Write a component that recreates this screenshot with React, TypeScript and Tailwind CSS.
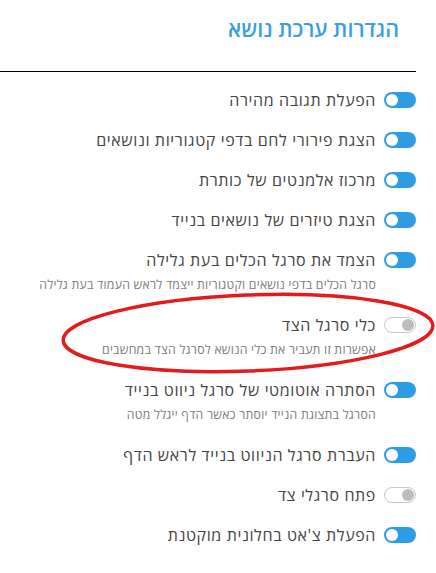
import { useState } from "react";

type Setting = {
  id: string;
  label: string;
  hint?: string;
  on: boolean;
};

const initialSettings: Setting[] = [
  { id: "quick-reply", label: "הפעלת תגובה מהירה", on: true },
  { id: "breadcrumbs", label: "הצגת פירורי לחם בדפי קטגוריות ונושאים", on: true },
  { id: "center-title", label: "מרכוז אלמנטים של כותרת", on: true },
  { id: "mobile-teasers", label: "הצגת טיזרים של נושאים בנייד", on: true },
  {
    id: "sticky-toolbar",
    label: "הצמד את סרגל הכלים בעת גלילה",
    hint: "סרגל הכלים בדפי נושאים וקטגוריות ייצמד לראש העמוד בעת גלילה",
    on: true,
  },
  {
    id: "sidebar-tools",
    label: "כלי סרגל הצד",
    hint: "אפשרות זו תעביר את כלי הנושא לסרגל הצד במחשבים",
    on: false,
  },
  {
    id: "autohide-mobile-nav",
    label: "הסתרה אוטומטי של סרגל ניווט בנייד",
    hint: "הסרגל בתצוגת הנייד יוסתר כאשר הדף ייגלל מטה",
    on: true,
  },
  { id: "mobile-nav-top", label: "העברת סרגל הניווט בנייד לראש הדף", on: true },
  { id: "open-sidebars", label: "פתח סרגלי צד", on: false },
  { id: "chat-window", label: "הפעלת צ'אט בחלונית מוקטנת", on: true },
];

function Toggle({ on, onChange }: { on: boolean; onChange: () => void }) {
  return (
    <button
      type="button"
      onClick={onChange}
      className={
        on
          ? "flex h-4 w-8 shrink-0 items-center justify-end rounded-full bg-[#2f9de6] px-[2px]"
          : "flex h-4 w-8 shrink-0 items-center justify-start rounded-full border border-[#c4c7cc] bg-white px-[1px]"
      }
    >
      <span
        className={
          on
            ? "h-3 w-3 rounded-full bg-white"
            : "h-3 w-3 rounded-full bg-[#bdbdbd]"
        }
      />
    </button>
  );
}

export default function App() {
  const [settings, setSettings] = useState(initialSettings);

  const flip = (id: string) =>
    setSettings((s) => s.map((x) => (x.id === id ? { ...x, on: !x.on } : x)));

  return (
    <div
      className="relative h-[573px] w-[436px] overflow-hidden bg-white"
      style={{ fontFamily: '"Open Sans", "Liberation Sans", "DejaVu Sans", sans-serif' }}
    >
      <div dir="rtl" className="w-[416px]">
        <div className="h-[72px] border-b border-black pr-[17px] pt-[15px]">
          <h2 className="text-[21.5px] font-semibold leading-7 text-[#3a9fe0]">
            הגדרות ערכת נושא
          </h2>
        </div>

        <ul className="pt-[8px]">
          {settings.map((s) => (
            <li key={s.id} className="py-2">
              <div className="flex items-center gap-2">
                <Toggle on={s.on} onChange={() => flip(s.id)} />
                <span className="text-[16px] leading-6 tracking-[0.62px] text-[#444]">
                  {s.label}
                </span>
              </div>
              {s.hint && (
                <p className="mt-[1px] pr-10 text-[12.25px] leading-6 tracking-[0.25px] text-[#7b7b7b]">
                  {s.hint}
                </p>
              )}
            </li>
          ))}
        </ul>
      </div>

      {/* red annotation circle */}
      <svg
        className="pointer-events-none absolute left-0 top-0"
        width="436"
        height="573"
        viewBox="0 0 436 573"
      >
        <ellipse
          cx="248"
          cy="333"
          rx="185"
          ry="38"
          transform="rotate(-2.3 248 333)"
          fill="none"
          stroke="#e31b1b"
          strokeWidth="3.5"
        />
      </svg>
    </div>
  );
}
